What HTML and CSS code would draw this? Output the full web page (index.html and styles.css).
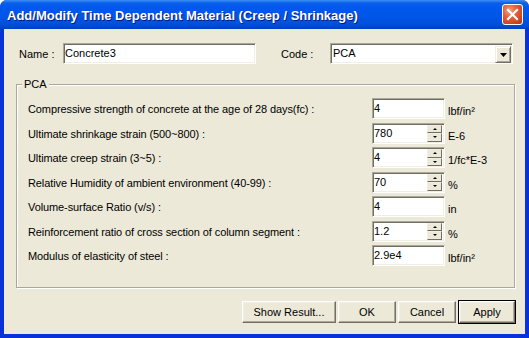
FILE: index.html
```html
<!DOCTYPE html>
<html lang="en">
<head>
    <meta charset="UTF-8">
    <title>Add/Modify Time Dependent Material</title>
    <link rel="stylesheet" href="styles.css">
</head>
<body>
    <div class="window">
        <div class="titlebar">
            <span class="title">Add/Modify Time Dependent Material (Creep / Shrinkage)</span>
            <span class="close-btn">
                <svg width="21" height="21" viewBox="0 0 21 21">
                    <path d="M6 6 L15 15 M15 6 L6 15" stroke="#fff" stroke-width="2.2" stroke-linecap="square"/>
                </svg>
            </span>
        </div>

        <div class="client">
            <!-- name / code -->
            <div class="top-row">
                <span class="lbl name-lbl">Name :</span>
                <div class="field name-field">Concrete3</div>
                <span class="lbl code-lbl">Code :</span>
                <div class="field combo">
                    <span class="combo-text">PCA</span>
                    <span class="drop-btn">
                        <svg width="7" height="4" viewBox="0 0 7 4"><path d="M0 0 H7 L3.5 4 Z" fill="#000"/></svg>
                    </span>
                </div>
            </div>

            <!-- PCA parameters -->
            <fieldset class="group">
                <legend>PCA</legend>

                <div class="row">
                    <span class="row-lbl">Compressive strength of concrete at the age of 28 days(fc) :</span>
                    <div class="field num">4</div>
                    <span class="unit">lbf/in²</span>
                </div>
                <div class="row">
                    <span class="row-lbl">Ultimate shrinkage strain (500~800) :</span>
                    <div class="field num">780<span class="spin"><i class="up"></i><i class="down"></i></span></div>
                    <span class="unit">E-6</span>
                </div>
                <div class="row">
                    <span class="row-lbl">Ultimate creep strain (3~5) :</span>
                    <div class="field num">4<span class="spin"><i class="up"></i><i class="down"></i></span></div>
                    <span class="unit">1/fc*E-3</span>
                </div>
                <div class="row">
                    <span class="row-lbl">Relative Humidity of ambient environment (40-99) :</span>
                    <div class="field num">70<span class="spin"><i class="up"></i><i class="down"></i></span></div>
                    <span class="unit">%</span>
                </div>
                <div class="row">
                    <span class="row-lbl">Volume-surface Ratio (v/s) :</span>
                    <div class="field num">4</div>
                    <span class="unit">in</span>
                </div>
                <div class="row">
                    <span class="row-lbl">Reinforcement ratio of cross section of column segment :</span>
                    <div class="field num">1.2<span class="spin"><i class="up"></i><i class="down"></i></span></div>
                    <span class="unit">%</span>
                </div>
                <div class="row">
                    <span class="row-lbl">Modulus of elasticity of steel :</span>
                    <div class="field num">2.9e4</div>
                    <span class="unit">lbf/in²</span>
                </div>
            </fieldset>

            <div class="buttons">
                <button class="btn wide">Show Result...</button>
                <button class="btn">OK</button>
                <button class="btn">Cancel</button>
                <button class="btn default">Apply</button>
            </div>
        </div>
    </div>
</body>
</html>
```

FILE: styles.css
```css
html, body {
    margin: 0;
    padding: 0;
    background: #fff;
}
.window {
    width: 529px;
    height: 338px;
    display: flex;
    flex-direction: column;
    background: #0831d9;
    border-radius: 7px 7px 0 0;
    overflow: hidden;
    font-family: "Liberation Sans", Arial, sans-serif;
    font-size: 11px;
    color: #000;
}
.titlebar {
    height: 29px;
    flex: none;
    display: flex;
    align-items: center;
    padding: 0 6px 0 7px;
    background: linear-gradient(to bottom, #3d8ff5 0, #0a60ea 3px, #0058ee 7px, #0055e6 60%, #004fd9 85%, #003fc0 100%);
}
.title {
    flex: 1;
    color: #fff;
    font-weight: bold;
    font-size: 13px;
    text-shadow: 1px 1px 0 #0a1883;
    padding-top: 1px;
}
.close-btn {
    width: 21px;
    height: 21px;
    box-sizing: border-box;
    border: 1px solid #fff;
    border-radius: 3px;
    background: radial-gradient(circle at 35% 30%, #f0a58c 0, #e5643d 35%, #c8401a 80%, #b13612 100%);
    display: flex;
    align-items: center;
    justify-content: center;
}
.close-btn svg {
    margin: -1px;
}
.client {
    flex: 1;
    margin: 0 4px 4px 4px;
    background: #ece9d8;
    padding: 14px 10px 0 12px;
}

/* sunken edit box */
.field {
    box-sizing: border-box;
    height: 21px;
    background: #fff;
    border-top: 1px solid #aca899;
    border-left: 1px solid #aca899;
    border-right: 1px solid #fff;
    border-bottom: 1px solid #fff;
    box-shadow: inset 1px 1px 0 #716f64, inset -1px -1px 0 #f1efe2;
    padding: 3px 0 0 1px;
    line-height: 13px;
    position: relative;
}

.top-row {
    display: flex;
    align-items: center;
    height: 21px;
}
.lbl {
    padding-top: 1px;
}
.name-lbl {
    width: 47px;
    padding-left: 3px;
    box-sizing: border-box;
}
.name-field {
    width: 193px;
}
.code-lbl {
    margin-left: 25px;
    width: 49px;
}
.combo {
    width: 183px;
    display: flex;
    justify-content: space-between;
    padding-left: 2px;
}
.drop-btn {
    width: 16px;
    height: 17px;
    margin: -1px 1px 0 0;
    box-sizing: border-box;
    background: #ece9d8;
    border-top: 1px solid #f1efe2;
    border-left: 1px solid #f1efe2;
    border-right: 1px solid #716f64;
    border-bottom: 1px solid #716f64;
    box-shadow: inset 1px 1px 0 #fff, inset -1px -1px 0 #aca899;
    display: flex;
    align-items: center;
    justify-content: center;
}

/* group box */
.group {
    margin: 14px 0 0 0;
    width: 499px;
    height: 210px;
    box-sizing: border-box;
    border: 1px solid #aca899;
    box-shadow: inset 1px 1px 0 #fff, 1px 1px 0 #fff;
    padding: 7px 0 0 11px;
    display: flex;
    flex-direction: column;
    gap: 3.5px;
}
.group legend {
    margin-left: -6px;
    padding: 0 2px;
    line-height: 13px;
    background: #ece9d8;
}
.row {
    display: flex;
    align-items: center;
    height: 21px;
}
.row-lbl {
    width: 344px;
    padding-top: 1px;
    letter-spacing: -0.1px;
}
.num {
    width: 73px;
}
.unit {
    margin-left: 3px;
    padding-top: 5px;
}
.spin {
    position: absolute;
    right: 2px;
    top: 1px;
    width: 15px;
    height: 17px;
    display: flex;
    flex-direction: column;
}
.spin i {
    flex: 1;
    box-sizing: border-box;
    background: #ece9d8;
    border-top: 1px solid #f1efe2;
    border-left: 1px solid #f1efe2;
    border-right: 1px solid #716f64;
    border-bottom: 1px solid #716f64;
    position: relative;
}
.spin i::after {
    content: "";
    position: absolute;
    left: 5px;
    width: 0;
    height: 0;
    border-left: 2px solid transparent;
    border-right: 2px solid transparent;
}
.spin .up::after {
    top: 2px;
    border-bottom: 2px solid #000;
}
.spin .down::after {
    top: 2px;
    border-top: 2px solid #000;
}

/* dialog buttons */
.buttons {
    display: flex;
    justify-content: flex-end;
    gap: 2px;
    margin-top: 13px;
}
.btn {
    width: 58px;
    height: 22px;
    box-sizing: border-box;
    font-family: "Liberation Sans", Arial, sans-serif;
    font-size: 11px;
    color: #000;
    padding: 0;
    background: #ece9d8;
    border-top: 1px solid #fff;
    border-left: 1px solid #fff;
    border-right: 1px solid #716f64;
    border-bottom: 1px solid #716f64;
    box-shadow: inset -1px -1px 0 #aca899, inset 1px 1px 0 #f1efe2;
    border-radius: 0;
}
.btn.wide {
    width: 94px;
}
.btn.default {
    outline: 1px solid #000;
    outline-offset: 0;
    width: 56px;
    margin-left: 1px;
}
```
